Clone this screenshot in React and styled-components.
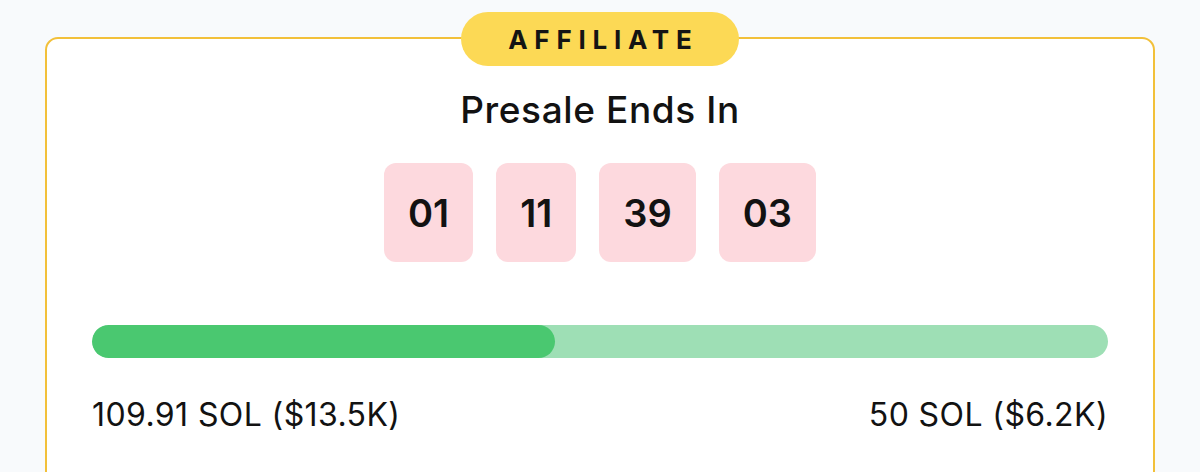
import React from "react";
import styled, { createGlobalStyle } from "styled-components";

const GlobalStyle = createGlobalStyle`
  html, body {
    margin: 0;
    padding: 0;
    background: #f8fafc;
    font-family: "Inter", "Liberation Sans", sans-serif;
    color: #111111;
  }
`;

const Page = styled.div`
  padding: 37px 45px 0 45px;
  height: 472px;
  box-sizing: border-box;
  overflow: hidden;
`;

const Card = styled.div`
  position: relative;
  background: #ffffff;
  border: 2.5px solid #f2c03a;
  border-radius: 13px;
  padding: 49px 45px 60px 45px;
  display: flex;
  flex-direction: column;
  align-items: center;
`;

const Badge = styled.div`
  position: absolute;
  top: 0;
  left: 50%;
  transform: translate(-50%, -50%);
  width: 278px;
  height: 54px;
  border-radius: 27px;
  background: #fcd955;
  display: flex;
  align-items: center;
  justify-content: center;
  font-size: 26px;
  font-weight: 700;
  letter-spacing: 0.26em;
  padding-left: 0.26em;
  box-sizing: border-box;
  color: #141414;
`;

const Title = styled.h2`
  margin: 0;
  font-size: 37px;
  font-weight: 500;
  line-height: 44px;
  letter-spacing: 0.6px;
  color: #121212;
`;

const Countdown = styled.div`
  display: flex;
  gap: 23px;
  margin-top: 31px;
`;

const TimeBox = styled.div`
  height: 99px;
  padding: 0 24px;
  border-radius: 12px;
  background: #fdd9de;
  display: flex;
  align-items: center;
  justify-content: center;
  font-size: 38px;
  font-weight: 600;
  color: #121212;
`;

const Track = styled.div`
  align-self: stretch;
  height: 33px;
  margin-top: 63px;
  border-radius: 17px;
  background: #9edfb5;
  overflow: hidden;
`;

const Fill = styled.div`
  height: 100%;
  border-radius: 17px;
  background: #4ac870;
`;

const Amounts = styled.div`
  align-self: stretch;
  display: flex;
  justify-content: space-between;
  margin-top: 37px;
  font-size: 32px;
  line-height: 40px;
  letter-spacing: 0.4px;
  color: #121212;
`;

const times = ["01", "11", "39", "03"];

export default function App() {
  const progress = 45.6;
  return (
    <>
      <GlobalStyle />
      <Page>
        <Card>
          <Badge>AFFILIATE</Badge>
          <Title>Presale Ends In</Title>
          <Countdown>
            {times.map((t, i) => (
              <TimeBox key={i}>{t}</TimeBox>
            ))}
          </Countdown>
          <Track>
            <Fill style={{ width: `${progress}%` }} />
          </Track>
          <Amounts>
            <span>109.91 SOL ($13.5K)</span>
            <span>50 SOL ($6.2K)</span>
          </Amounts>
        </Card>
      </Page>
    </>
  );
}
